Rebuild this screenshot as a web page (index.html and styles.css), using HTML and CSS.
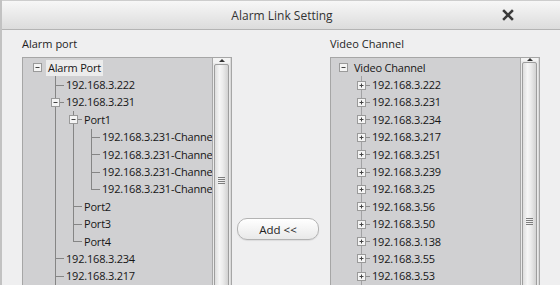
FILE: index.html
```html
<!DOCTYPE html>
<html lang="en">
<head>
  <meta charset="UTF-8" />
  <title>Alarm Link Setting</title>
  <link rel="stylesheet" href="styles.css">
</head>
<body>

<div class="dialogo">
  <div class="titulo">
    <span></span>
    <span class="titulo-texto">Alarm Link Setting</span>
    <button type="button" class="cerrar" aria-label="Close">
      <svg width="12" height="12" viewBox="0 0 12 12"><path d="M2 2L10 10M10 2L2 10" stroke="#3a3a3a" stroke-width="2.5" stroke-linecap="square"/></svg>
    </button>
  </div>

  <div class="cuerpo">
    <div class="panel">
      <div class="etiqueta">Alarm port</div>
      <div class="caja">
        <div class="arbol izq" id="arbolIzq"></div>
        <div class="scroll">
          <div class="flecha"></div>
          <div class="pulgar largo-izq"><span class="agarre"></span></div>
        </div>
      </div>
    </div>

    <div class="centro">
      <button type="button" class="agregar">Add &lt;&lt;</button>
    </div>

    <div class="panel">
      <div class="etiqueta">Video Channel</div>
      <div class="caja">
        <div class="arbol der" id="arbolDer"></div>
        <div class="scroll">
          <div class="flecha"></div>
          <div class="pulgar largo-der"><span class="agarre"></span></div>
        </div>
      </div>
    </div>
  </div>
</div>

<script>
// celdas: " " vacia, "|" linea, "t" rama, "e" final, "-" / "+" expansor
const izquierda = [
  [["-"], "Alarm Port", true],
  [[" ", "t"], "192.168.3.222"],
  [[" ", "t-"], "192.168.3.231"],
  [[" ", "|", "t-"], "Port1"],
  [[" ", "|", "|", "t"], "192.168.3.231-Channel1"],
  [[" ", "|", "|", "t"], "192.168.3.231-Channel2"],
  [[" ", "|", "|", "t"], "192.168.3.231-Channel3"],
  [[" ", "|", "|", "e"], "192.168.3.231-Channel4"],
  [[" ", "|", "t"], "Port2"],
  [[" ", "|", "t"], "Port3"],
  [[" ", "|", "e"], "Port4"],
  [[" ", "t"], "192.168.3.234"],
  [[" ", "t"], "192.168.3.217"]
];

const ips = ["222", "231", "234", "217", "251", "239", "25", "56", "50", "138", "55", "53"];
const derecha = [[["-"], "Video Channel"]].concat(
  ips.map(n => [[" ", "t+"], "192.168.3." + n])
);

function expansor(signo) {
  const barra = signo === "+" ? '<path d="M4.5 2.5v4" stroke="#444"/>' : "";
  return `<svg class="exp" width="9" height="9" viewBox="0 0 9 9">
    <rect x="0.5" y="0.5" width="8" height="8" fill="#f4f4f4" stroke="#9a9a9a"/>
    <path d="M2.5 4.5h4" stroke="#444"/>${barra}</svg>`;
}

function pintar(id, filas) {
  const arbol = document.getElementById(id);
  filas.forEach(([celdas, texto, sel]) => {
    const fila = document.createElement("div");
    fila.className = "fila";
    let html = "";
    celdas.forEach(c => {
      let clase = "celda";
      if (c[0] === "|") clase += " linea";
      if (c[0] === "t") clase += " rama";
      if (c[0] === "e") clase += " final";
      const signo = c.slice(-1);
      html += `<span class="${clase}">${signo === "-" || signo === "+" ? expansor(signo) : ""}</span>`;
    });
    html += `<span class="texto${sel ? " sel" : ""}">${texto}</span>`;
    fila.innerHTML = html;
    arbol.appendChild(fila);
  });
}

pintar("arbolIzq", izquierda);
pintar("arbolDer", derecha);
</script>

</body>
</html>
```

FILE: styles.css
```css
body {
  margin: 0;
  font-family: "Open Sans", "Liberation Sans", sans-serif;
  font-size: 11px;
  color: #161616;
}

.dialogo {
  width: 560px;
  height: 285px;
  overflow: hidden;
  background: #efeff0;
  border-left: 2px solid #c2c2c2;
  box-sizing: border-box;
}

.titulo {
  height: 30px;
  box-sizing: border-box;
  display: grid;
  grid-template-columns: 1fr auto 1fr;
  align-items: center;
  background: linear-gradient(#f7f7f7, #dcdcdc);
  border-top: 1px solid #cdcdcd;
  border-bottom: 1px solid #b4b4b4;
}

.titulo-texto {
  font-size: 12px;
  color: #333;
  padding-left: 2px;
}

.cerrar {
  justify-self: end;
  margin-right: 46px;
  padding: 0;
  border: none;
  background: none;
  display: flex;
}

.cuerpo {
  display: grid;
  grid-template-columns: 210px 98px 210px;
  padding: 6px 0 0 20px;
}

.panel {
  min-width: 0;
}

.etiqueta {
  line-height: 16px;
  height: 16px;
  margin-bottom: 5px;
  color: #1e1e1e;
}

.caja {
  display: flex;
  height: 240px;
  border: 1px solid #a6a6a6;
  background: #d0d0d2;
}

.arbol {
  flex: 1;
  min-width: 0;
  overflow: hidden;
  padding-top: 1px;
}

.arbol.izq {
  padding-left: 5px;
}

.arbol.der {
  padding-left: 3px;
}

.fila {
  display: flex;
  align-items: center;
  height: 17.4px;
  white-space: nowrap;
}

.celda {
  flex: none;
  width: 18px;
  height: 100%;
  display: flex;
  align-items: center;
  justify-content: center;
  background-repeat: no-repeat;
}

.izq .celda.linea {
  background-image: linear-gradient(#858585, #858585);
  background-position: 9px 0;
  background-size: 1px 100%;
}

.izq .celda.rama {
  background-image: linear-gradient(#858585, #858585), linear-gradient(#858585, #858585);
  background-position: 9px 0, 9px 50%;
  background-size: 1px 100%, 9px 1px;
}

.izq .celda.final {
  background-image: linear-gradient(#858585, #858585), linear-gradient(#858585, #858585);
  background-position: 9px 0, 9px 50%;
  background-size: 1px 50%, 9px 1px;
}

.der .celda.rama {
  background-image: linear-gradient(#a2a2a4, #a2a2a4), linear-gradient(#8e8e8e, #8e8e8e);
  background-position: 9px 0, 9px 50%;
  background-size: 1px 100%, 9px 1px;
}

.exp {
  display: block;
}

.texto {
  padding: 0 2px;
  line-height: 16px;
  letter-spacing: -0.2px;
}

.texto.sel {
  background: #ececec;
}

.scroll {
  flex: none;
  width: 17px;
  border-left: 1px solid #a9a9a9;
  border-right: 1px solid #dadada;
  background: #eaeaea;
  display: flex;
  flex-direction: column;
}

.flecha {
  height: 19px;
  background: #f3f3f3;
  display: flex;
  align-items: center;
  justify-content: center;
}

.flecha::before {
  content: "";
  border-left: 3px solid transparent;
  border-right: 3px solid transparent;
  border-bottom: 3px solid #333;
}

.pulgar {
  flex: none;
  margin: 1px 1px 0;
  border: 1px solid #9e9e9e;
  border-radius: 2px;
  background: linear-gradient(to right, #dedede, #f6f6f6 35%, #ececec 60%, #d2d2d2);
  display: flex;
  align-items: center;
  justify-content: center;
}

.largo-izq {
  height: 232px;
}

.largo-der {
  height: 318px;
}

.agarre {
  width: 7px;
  height: 8px;
  background: repeating-linear-gradient(#7d7d7d 0 1px, transparent 1px 2px);
}

.centro {
  padding: 182px 0 0 5px;
}

.agregar {
  width: 82px;
  height: 22px;
  border: 1px solid #b3b3b3;
  border-radius: 10px;
  background: linear-gradient(#ffffff, #e9e9e9);
  font-family: "Open Sans", "Liberation Sans", sans-serif;
  font-size: 11.5px;
  color: #222;
  padding: 0;
  box-shadow: 0 1px 1px rgba(0,0,0,0.08);
}
```
